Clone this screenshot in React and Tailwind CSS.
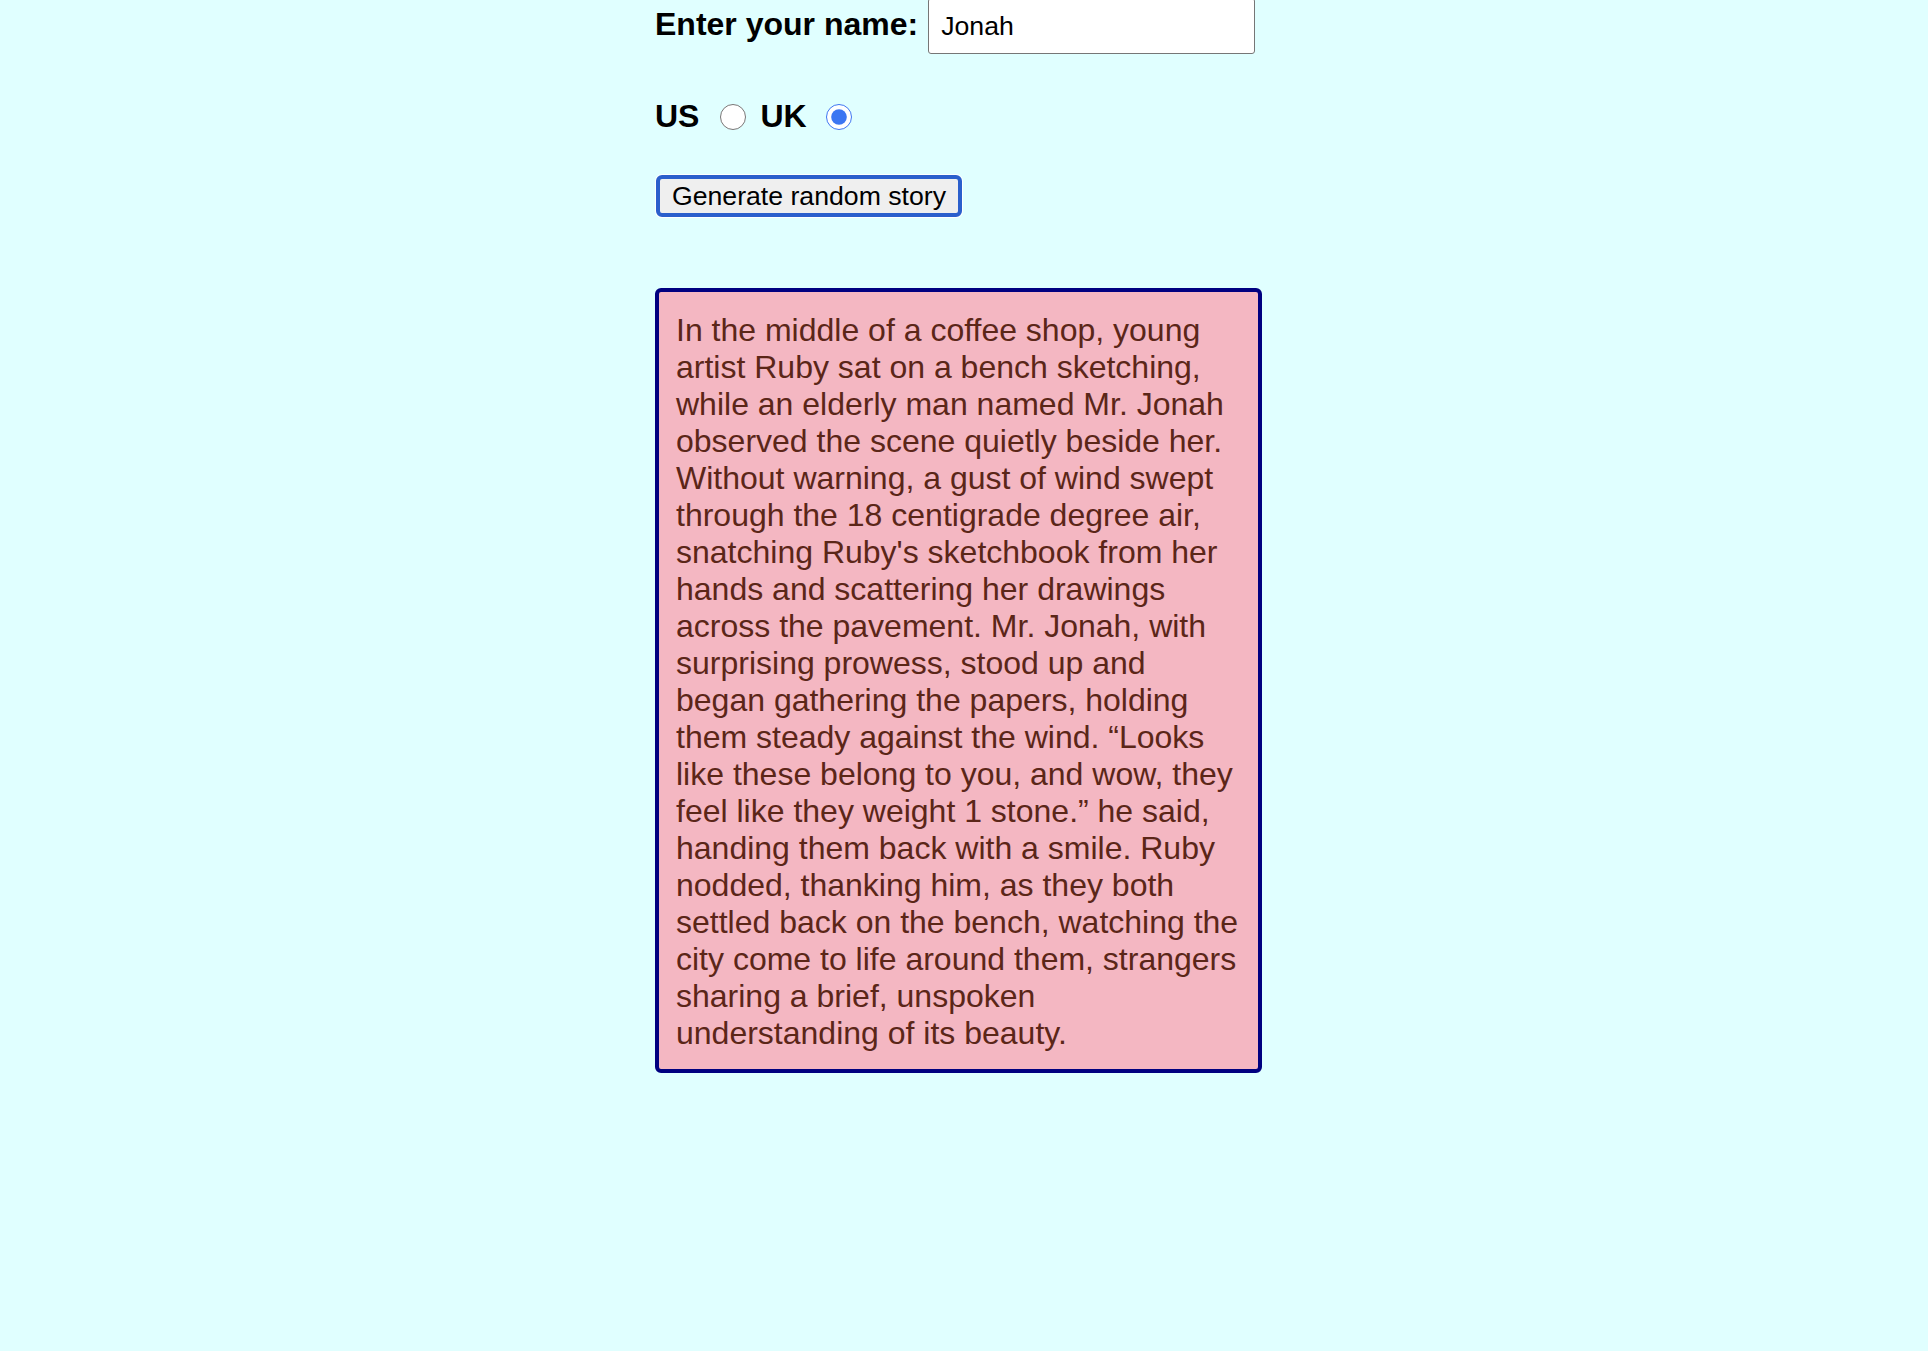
import { useState } from 'react';

const story =
  'In the middle of a coffee shop, young artist Ruby sat on a bench sketching, while an elderly man named Mr. Jonah observed the scene quietly beside her. Without warning, a gust of wind swept through the 18 centigrade degree air, snatching Ruby\'s sketchbook from her hands and scattering her drawings across the pavement. Mr. Jonah, with surprising prowess, stood up and began gathering the papers, holding them steady against the wind. \u201cLooks like these belong to you, and wow, they feel like they weight 1 stone.\u201d he said, handing them back with a smile. Ruby nodded, thanking him, as they both settled back on the bench, watching the city come to life around them, strangers sharing a brief, unspoken understanding of its beauty.';

export default function App() {
  const [name, setName] = useState('Jonah');
  const [country, setCountry] = useState('uk');

  return (
    <div className="min-h-screen bg-[#e0ffff] font-['Liberation_Sans',Arial,sans-serif] text-black">
      <div className="ml-[655px] w-[607px] flex flex-col items-start">
        {/* Name row */}
        <div className="flex items-baseline -mt-[2px] h-[56px]">
          <label htmlFor="customname" className="text-[32px] font-bold leading-[37px]">
            Enter your name:
          </label>
          <input
            id="customname"
            type="text"
            value={name}
            onChange={(e) => setName(e.target.value)}
            className="ml-[10px] w-[327px] h-[56px] pl-[12px] pr-2 bg-white border border-[#767676] rounded-[3px] text-[26.67px] text-black outline-none"
          />
        </div>

        {/* Country radios */}
        <div className="flex items-center h-[37px] mt-[44px] text-[32px] font-bold leading-[37px]">
          <label htmlFor="us">US</label>
          <input
            id="us"
            type="radio"
            name="ukus"
            checked={country === 'us'}
            onChange={() => setCountry('us')}
            className="ml-[21px] m-0 w-[26px] h-[26px] accent-[#3b76f2]"
          />
          <label htmlFor="uk" className="ml-[14px]">UK</label>
          <input
            id="uk"
            type="radio"
            name="ukus"
            checked={country === 'uk'}
            onChange={() => setCountry('uk')}
            className="ml-[19px] m-0 w-[26px] h-[26px] accent-[#3b76f2]"
          />
        </div>

        {/* Generate button */}
        <button className="mt-[40px] ml-[1px] w-[306px] h-[42px] bg-[#efefef] border-[4px] border-[#2b5fcc] rounded-[6px] ring-1 ring-white text-[26.67px] leading-none text-black flex items-center justify-center">
          Generate random story
        </button>

        {/* Story */}
        <p className="mt-[71px] w-[607px] h-[785px] bg-[#f4b7c2] border-[4px] border-[#000080] rounded-[6px] pt-[20px] pb-[16px] pl-[17px] pr-[15px] text-[32px] leading-[37px] text-[#5b2618]">
          {story}
        </p>
      </div>
    </div>
  );
}
